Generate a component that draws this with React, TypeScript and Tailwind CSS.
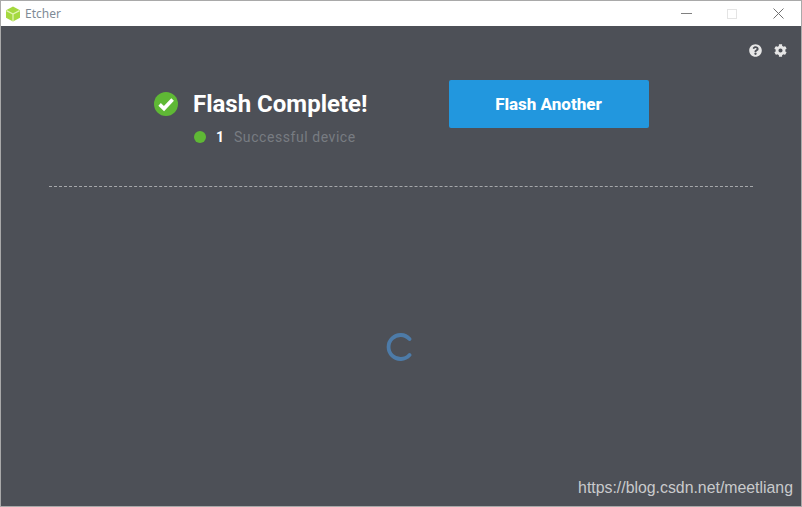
import React from "react";
import { FaQuestionCircle, FaCog } from "react-icons/fa";

export default function App() {
  return (
    <div className="relative flex h-[507px] w-[802px] flex-col overflow-hidden border border-[#a9a9a9] bg-[#4d5057] font-['Roboto',sans-serif]">
      <div className="flex h-[25px] shrink-0 items-center bg-white">
        <svg width="16" height="16" viewBox="0 0 16 16" className="ml-[4px]">
          <path d="M8 0.5 L15 4.3 V11.7 L8 15.5 L1 11.7 V4.3 Z" fill="#a5d93f" />
          <path d="M1.5 4.6 L8 8 L14.5 4.6 M8 8 V15" fill="none" stroke="#e3f5b4" strokeWidth="1.2" />
        </svg>
        <span className="ml-[4px] font-['Noto_Sans',sans-serif] text-[12px] text-[#7e8a96]">Etcher</span>
        <div className="ml-auto flex items-center">
          <div className="mr-[35px] h-px w-[11px] bg-[#808080]" />
          <div className="mr-[36px] h-[10px] w-[10px] border border-[#e4e4e4]" />
          <svg width="11" height="11" viewBox="0 0 11 11" className="mr-[17px]">
            <path d="M0.5 0.5 L10.5 10.5 M10.5 0.5 L0.5 10.5" stroke="#707070" strokeWidth="1" />
          </svg>
        </div>
      </div>
      <div className="flex flex-1 flex-col">
        <div className="flex justify-end gap-[13px] pt-[18px] pr-[14px] text-[#e6e6e6]">
          <FaQuestionCircle size={13} className="translate-x-px" />
          <FaCog size={13} />
        </div>
        <div className="mt-[23px] flex items-start">
          <div className="ml-[153px] flex w-[295px] flex-col">
            <div className="flex h-[48px] items-center">
              <svg width="24" height="24" viewBox="0 0 24 24">
                <circle cx="12" cy="12" r="12" fill="#5fb835" />
                <path d="M5.6 12.4 L10 16.6 L18.6 7.6" fill="none" stroke="#ffffff" strokeWidth="3.6" />
              </svg>
              <span className="ml-[15px] text-[24px] leading-[30px] font-bold text-white">Flash Complete!</span>
            </div>
            <div className="flex h-[18px] items-center text-[14px]">
              <span className="ml-[40px] h-[12px] w-[12px] rounded-full bg-[#5fb835]" />
              <span className="ml-[10px] w-[18px] font-bold text-white">1</span>
              <span className="tracking-[0.56px] text-[#787c82]">Successful device</span>
            </div>
          </div>
          <button className="h-[48px] w-[200px] rounded-[2px] bg-[#2297de] pt-px pr-px text-[17px] font-extrabold text-white">
            Flash Another
          </button>
        </div>
        <div className="mx-[48px] mt-[40px] border-t border-dashed border-[#a6a8ab]" />
        <div className="flex flex-1 items-center justify-center">
          <svg width="28" height="28" viewBox="0 0 28 28" className="-translate-x-px">
            <path d="M23.5 6 A12 12 0 1 0 23.5 22" fill="none" stroke="#4d7ba8" strokeWidth="3.8" strokeLinecap="round" />
          </svg>
        </div>
      </div>
      <span className="absolute right-[8px] bottom-[8px] font-['Liberation_Sans',sans-serif] text-[15.85px] leading-[20px] text-[#c9cacc]">
        https://blog.csdn.net/meetliang
      </span>
    </div>
  );
}
